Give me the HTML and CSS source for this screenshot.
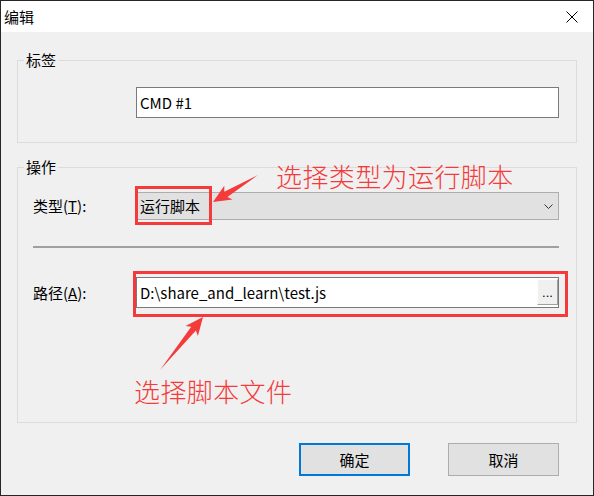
FILE: index.html
```html
<!DOCTYPE html>
<html lang="zh-CN">
<head>
<meta charset="utf-8">
<title>编辑</title>
<link rel="stylesheet" href="styles.css">
</head>
<body>
<div class="window">
  <div class="titlebar">
    <span class="title">编辑</span>
    <svg class="close" width="12" height="12" viewBox="0 0 12 12"><path d="M0.5 0.5 L11.5 11.5 M11.5 0.5 L0.5 11.5" stroke="#000" stroke-width="1" fill="none"/></svg>
  </div>
  <div class="content">
    <fieldset class="group g1">
      <legend>标签</legend>
      <div class="gbody">
        <div class="row">
          <div class="textbox">CMD #1</div>
        </div>
      </div>
    </fieldset>
    <fieldset class="group g2">
      <legend>操作</legend>
      <div class="gbody">
        <div class="row">
          <span class="label">类型(<u>T</u>):</span>
          <div class="combo">
            <span>运行脚本</span>
            <svg class="chev" width="9" height="5" viewBox="0 0 9 5"><path d="M0.5 0.5 L4.5 4.5 L8.5 0.5" stroke="#333" stroke-width="1" fill="none"/></svg>
          </div>
        </div>
        <div class="sep"></div>
        <div class="row">
          <span class="label">路径(<u>A</u>):</span>
          <div class="textbox path">
            <span class="val">D:\share_and_learn\test.js</span>
            <span class="browse">...</span>
          </div>
        </div>
      </div>
    </fieldset>
    <div class="buttons">
      <div class="btn primary">确定</div>
      <div class="btn">取消</div>
    </div>
  </div>
</div>
<div class="annotations">
  <div class="mark mark1"></div>
  <div class="mark mark2"></div>
  <svg class="arrows" width="594" height="496" viewBox="0 0 594 496">
    <polygon points="213,202 232.5,199.6 227.4,196.9 258,175 224.3,191.7 224.3,185.8" fill="#f43a3a"/>
    <polygon points="203,317 197.9,336 195.9,330.6 160,370 191.2,326.8 185.5,326" fill="#f43a3a"/>
  </svg>
  <div class="note note1">选择类型为运行脚本</div>
  <div class="note note2">选择脚本文件</div>
</div>
</body>
</html>
```

FILE: styles.css
```css
html, body {
  margin: 0;
  padding: 0;
}
body {
  position: relative;
  width: 594px;
  height: 496px;
  overflow: hidden;
  background: #f0f0f0;
}
.window {
  width: 594px;
  height: 496px;
  box-sizing: border-box;
  border: 1px solid #262626;
  background: #f0f0f0;
  display: flex;
  flex-direction: column;
  font-family: "Noto Sans CJK SC", "Noto Sans", sans-serif;
  font-size: 15px;
  color: #000;
}
.titlebar {
  height: 31px;
  flex: none;
  background: #fff;
  display: flex;
  align-items: center;
  justify-content: space-between;
  padding: 0 15px 0 3px;
}
.title {
  font-size: 15px;
  line-height: 20px;
}
.close {
  display: block;
}
.content {
  padding: 18px 16px 0 16px;
  display: flex;
  flex-direction: column;
}
.group {
  margin: 0;
  padding: 0;
  border: 1px solid #dcdcdc;
  min-width: 0;
}
.group legend {
  padding: 0 2px;
  margin-left: 6px;
  line-height: 20px;
  font-size: 15px;
}
.g1 .gbody {
  padding: 17px 17px 24px 118px;
}
.g2 {
  margin-top: 14px;
}
.g2 .gbody {
  padding: 15px 17px 114px 15px;
}
.row {
  display: flex;
  align-items: center;
}
.label {
  width: 103px;
  flex: none;
  line-height: 20px;
}
.textbox {
  flex: 1;
  height: 31px;
  box-sizing: border-box;
  border: 1px solid #7a7a7a;
  background: #fff;
  display: flex;
  align-items: center;
  padding-left: 3px;
  line-height: 20px;
}
.path {
  justify-content: space-between;
}
.browse {
  width: 21px;
  height: 26px;
  box-sizing: border-box;
  background: #f0f0f0;
  border-top: 1px solid #fcfcfc;
  border-left: 1px solid #fcfcfc;
  border-right: 1px solid #a0a0a0;
  border-bottom: 1px solid #a0a0a0;
  font-family: "Liberation Sans", sans-serif;
  font-size: 13px;
  line-height: 26px;
  text-align: center;
  margin-top: -1px;
}
.combo {
  flex: 1;
  height: 28px;
  box-sizing: border-box;
  border: 1px solid #adadad;
  background: #e1e1e1;
  display: flex;
  align-items: center;
  justify-content: space-between;
  padding: 0 5px 0 3px;
  line-height: 20px;
}
.chev {
  display: block;
}
.sep {
  height: 2px;
  background: #a0a0a0;
  margin: 26px 0 29px 0;
}
.buttons {
  display: flex;
  justify-content: flex-end;
  gap: 38px;
  margin-top: 20px;
  padding-right: 18px;
}
.btn {
  width: 111px;
  height: 33px;
  box-sizing: border-box;
  border: 1px solid #adadad;
  background: #e1e1e1;
  display: flex;
  align-items: center;
  justify-content: center;
  line-height: 20px;
}
.btn.primary {
  border: 2px solid #0078d7;
}
.annotations {
  position: absolute;
  left: 0;
  top: 0;
  width: 594px;
  height: 496px;
  pointer-events: none;
}
.arrows {
  position: absolute;
  left: 0;
  top: 0;
}
.mark {
  position: absolute;
  box-sizing: border-box;
  border: 3px solid #f43a3a;
}
.mark1 {
  left: 135px;
  top: 186px;
  width: 77px;
  height: 39px;
}
.mark2 {
  left: 133px;
  top: 271px;
  width: 435px;
  height: 46px;
}
.note {
  position: absolute;
  font-family: "Noto Sans CJK SC", sans-serif;
  font-weight: 300;
  font-size: 26px;
  line-height: 26px;
  color: #f43a3a;
  white-space: nowrap;
}
.note1 {
  left: 276px;
  top: 163px;
  letter-spacing: 0.4px;
}
.note2 {
  left: 134px;
  top: 378px;
  letter-spacing: 0.4px;
}
```
